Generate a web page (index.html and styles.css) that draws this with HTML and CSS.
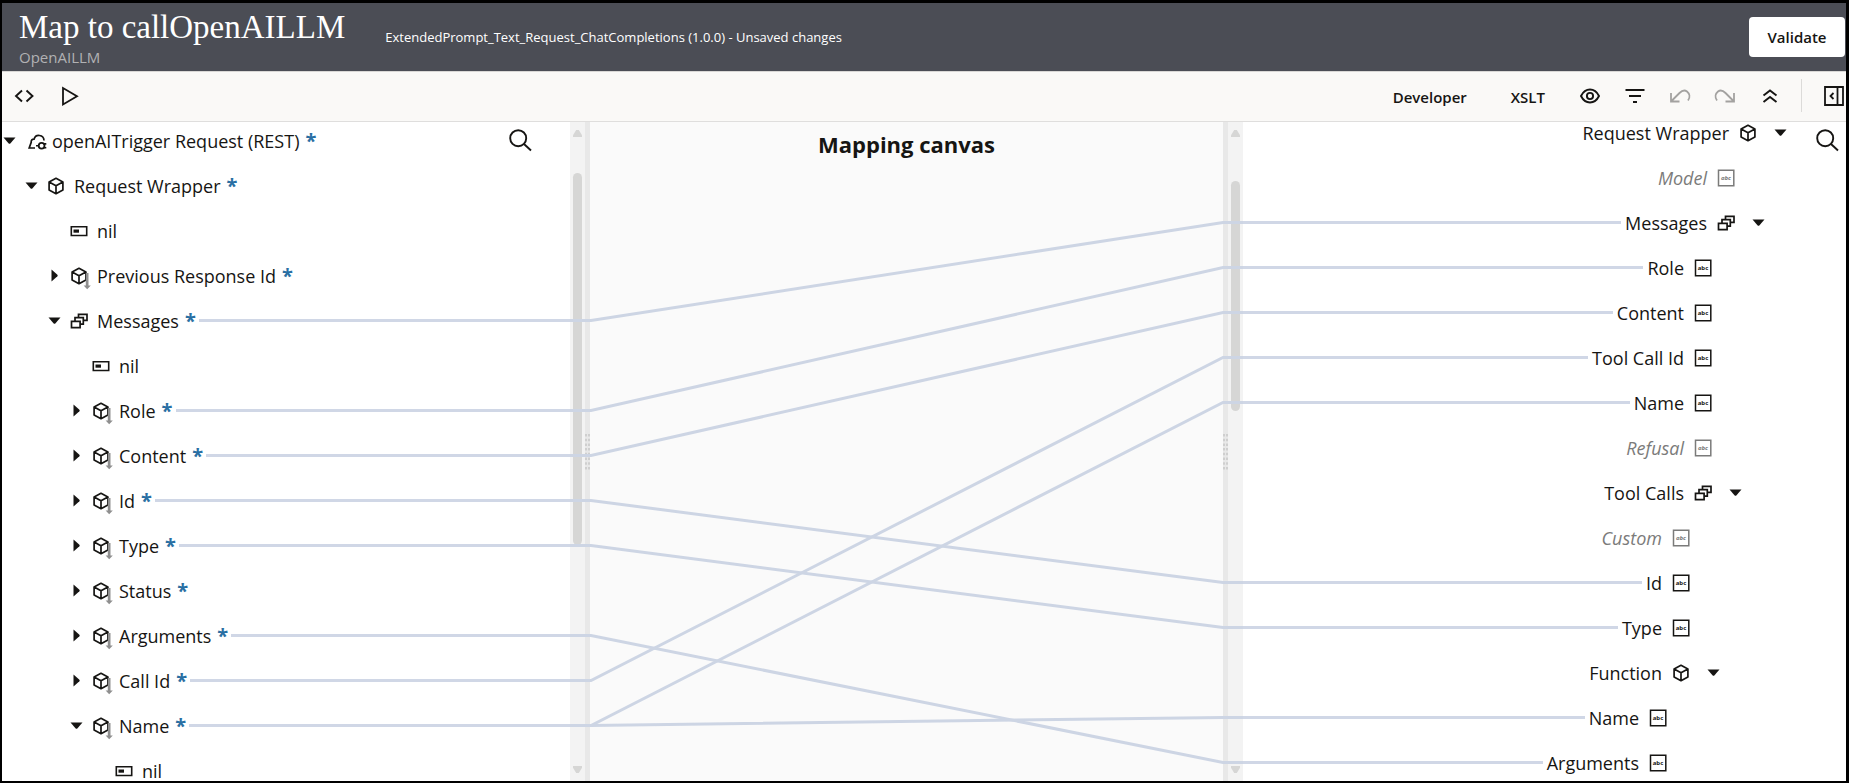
FILE: index.html
```html
<!DOCTYPE html>
<html lang="en">
<head>
<meta charset="utf-8">
<title>Map to callOpenAILLM</title>
<link rel="stylesheet" href="styles.css">
</head>
<body>
<svg class="defs" aria-hidden="true">
  <symbol id="cube" viewBox="0 0 20 20"><path d="M10 2.300 16.900 6v8L10 17.700 3.100 14V6zM3.100 6 10 9.800 16.900 6M10 9.800v7.900" fill="none" stroke="currentColor" stroke-width="1.700" stroke-linejoin="round"/></symbol>
  <symbol id="cube-down" viewBox="0 0 20 20"><path d="M10 2.300 16.900 6v8L10 17.700 3.100 14V6zM3.100 6 10 9.800 16.900 6M10 9.800v7.900" fill="none" stroke="currentColor" stroke-width="1.700" stroke-linejoin="round"/><path d="M16.800 7h2.700v12.500h2.300l-3.600 3.800-3.600-3.800h2.200z" fill="#8f8f8f"/></symbol>
  <symbol id="stack" viewBox="0 0 20 20"><path d="M2.500 10.300h8.600v6.400H2.500zM6 9.800V6.700h8.300v6.500H11.600M9.500 6.200V3.300h8.500v6h-3.200" fill="none" stroke="currentColor" stroke-width="1.700"/></symbol>
  <symbol id="attr" viewBox="0 0 20 20"><path d="M2.300 5.800h15.400v8.700H2.300z" fill="none" stroke="currentColor" stroke-width="1.600"/><path d="M4.500 8.500h5.500v3.200H4.500z" fill="currentColor"/></symbol>
  <symbol id="abc" viewBox="0 0 20 20"><path d="M2.500 2.300h15.300v15.400H2.500z" fill="none" stroke="currentColor" stroke-width="1.500"/><text x="10" y="12.300" text-anchor="middle" font-size="6" font-weight="700" fill="currentColor">abc</text></symbol>
  <symbol id="cloud" viewBox="0 0 20 20"><path d="M11 17H5.200l2-5.600c-.3-2 1-3.500 2.900-3.300C10.800 5.600 13 4.200 15.500 4.500c2.700.3 4.400 2.300 4.500 5" fill="none" stroke="currentColor" stroke-width="1.700"/><circle cx="17.600" cy="14.800" r="2.900" fill="none" stroke="currentColor" stroke-width="1.800"/><path d="M12 14.800h2.700M19.500 12.900h2.800M19.500 16.800h2.800" stroke="currentColor" stroke-width="1.600"/></symbol>
  <symbol id="down" viewBox="0 0 15 15"><path d="M1.500 4.500h12L8.300 10.400q-.8.700-1.600 0z" fill="currentColor"/></symbol>
  <symbol id="right" viewBox="0 0 15 15"><path d="M4.500 1.500v12L10.400 8.300q.7-.8 0-1.600z" fill="currentColor"/></symbol>
  <symbol id="search" viewBox="0 0 24 24"><circle cx="10.200" cy="10.200" r="8" fill="none" stroke="currentColor" stroke-width="1.900"/><path d="m16 16 7 6.500" stroke="currentColor" stroke-width="1.900"/></symbol>
  <symbol id="grip" viewBox="0 0 5 36"><path d="M1 0v36M4 0v36" stroke="#cfcfcf" stroke-width="2" stroke-dasharray="2.500 2.200"/></symbol>
</svg>

<div class="frame">
  <header class="header">
    <div class="names">
      <h1 class="title">Map to callOpenAILLM</h1>
      <p class="subtitle">OpenAILLM</p>
    </div>
    <p class="status">ExtendedPrompt_Text_Request_ChatCompletions (1.0.0) - Unsaved changes</p>
    <button class="validate" type="button">Validate</button>
  </header>

  <div class="toolbar">
    <div class="tools">
      <button class="tool" type="button" aria-label="Code"><svg viewBox="0 0 24 24"><path d="M10 6.500 4 12l6 5.500M14.500 6.500l6 5.500-6 5.500" fill="none" stroke="currentColor" stroke-width="1.900"/></svg></button>
      <button class="tool" type="button" aria-label="Test"><svg viewBox="0 0 24 24"><path d="M5 4v16.500L19 12.200z" fill="none" stroke="currentColor" stroke-width="1.800"/></svg></button>
    </div>
    <div class="tools tools-end">
      <button class="text-tool" type="button">Developer</button>
      <button class="text-tool" type="button">XSLT</button>
      <button class="tool" type="button" aria-label="View"><svg viewBox="0 0 24 24"><path d="M3 12c2-4 5-6.500 9-6.500S19 8 21 12c-2 4-5 6.500-9 6.500S5 16 3 12z" fill="none" stroke="currentColor" stroke-width="1.900"/><circle cx="12" cy="12" r="3.100" fill="none" stroke="currentColor" stroke-width="1.900"/></svg></button>
      <button class="tool" type="button" aria-label="Filter"><svg viewBox="0 0 24 24"><path d="M2.500 6h19M6 12h12M10 18h4" stroke="currentColor" stroke-width="1.900"/></svg></button>
      <button class="tool" type="button" aria-label="Undo" disabled><svg viewBox="0 0 24 24"><path d="M3 9v8.500h8.500M3.500 17 11.500 9c2-2 5-3.500 7.500-1.500s3.500 5.500 1 9" fill="none" stroke="currentColor" stroke-width="1.800"/></svg></button>
      <button class="tool" type="button" aria-label="Redo" disabled><svg viewBox="0 0 24 24"><path d="M21 9v8.500h-8.500M20.500 17 12.500 9c-2-2-5-3.500-7.500-1.500s-3.500 5.500-1 9" fill="none" stroke="currentColor" stroke-width="1.800"/></svg></button>
      <button class="tool" type="button" aria-label="Collapse all"><svg viewBox="0 0 24 24"><path d="m5.500 11.500 6.500-5 6.500 5M5.500 18l6.500-5 6.500 5" fill="none" stroke="currentColor" stroke-width="1.900"/></svg></button>
      <span class="divider"></span>
      <button class="tool panel-toggle" type="button" aria-label="Open panel"><svg viewBox="0 0 24 24"><path d="M3 3h18v18H3zM15.500 3v18M11.500 9l-3 3 3 3" fill="none" stroke="currentColor" stroke-width="1.800"/></svg></button>
    </div>
  </div>

  <main class="mapper">
    <section class="pane source" aria-label="Source">
      <button class="search" type="button" aria-label="Search source"><svg><use href="#search"/></svg></button>
      <ul class="tree">
        <li class="row l0"><button class="caret" aria-label="Collapse"><svg><use href="#down"/></svg></button><svg class="icon"><use href="#cloud"/></svg><span>openAITrigger Request (REST)</span><b class="req">*</b></li>
        <li class="row l1"><button class="caret" aria-label="Collapse"><svg><use href="#down"/></svg></button><svg class="icon"><use href="#cube"/></svg><span>Request Wrapper</span><b class="req">*</b></li>
        <li class="row l2"><i class="caret"></i><svg class="icon"><use href="#attr"/></svg><span>nil</span></li>
        <li class="row l2"><button class="caret" aria-label="Expand"><svg><use href="#right"/></svg></button><svg class="icon"><use href="#cube-down"/></svg><span>Previous Response Id</span><b class="req">*</b></li>
        <li class="row l2"><button class="caret" aria-label="Collapse"><svg><use href="#down"/></svg></button><svg class="icon"><use href="#stack"/></svg><span>Messages</span><b class="req">*</b><i class="wire"></i></li>
        <li class="row l3"><i class="caret"></i><svg class="icon"><use href="#attr"/></svg><span>nil</span></li>
        <li class="row l3"><button class="caret" aria-label="Expand"><svg><use href="#right"/></svg></button><svg class="icon"><use href="#cube-down"/></svg><span>Role</span><b class="req">*</b><i class="wire"></i></li>
        <li class="row l3"><button class="caret" aria-label="Expand"><svg><use href="#right"/></svg></button><svg class="icon"><use href="#cube-down"/></svg><span>Content</span><b class="req">*</b><i class="wire"></i></li>
        <li class="row l3"><button class="caret" aria-label="Expand"><svg><use href="#right"/></svg></button><svg class="icon"><use href="#cube-down"/></svg><span>Id</span><b class="req">*</b><i class="wire"></i></li>
        <li class="row l3"><button class="caret" aria-label="Expand"><svg><use href="#right"/></svg></button><svg class="icon"><use href="#cube-down"/></svg><span>Type</span><b class="req">*</b><i class="wire"></i></li>
        <li class="row l3"><button class="caret" aria-label="Expand"><svg><use href="#right"/></svg></button><svg class="icon"><use href="#cube-down"/></svg><span>Status</span><b class="req">*</b></li>
        <li class="row l3"><button class="caret" aria-label="Expand"><svg><use href="#right"/></svg></button><svg class="icon"><use href="#cube-down"/></svg><span>Arguments</span><b class="req">*</b><i class="wire"></i></li>
        <li class="row l3"><button class="caret" aria-label="Expand"><svg><use href="#right"/></svg></button><svg class="icon"><use href="#cube-down"/></svg><span>Call Id</span><b class="req">*</b><i class="wire"></i></li>
        <li class="row l3"><button class="caret" aria-label="Collapse"><svg><use href="#down"/></svg></button><svg class="icon"><use href="#cube-down"/></svg><span>Name</span><b class="req">*</b><i class="wire"></i></li>
        <li class="row l4"><i class="caret"></i><svg class="icon"><use href="#attr"/></svg><span>nil</span></li>
      </ul>
    </section>

    <section class="center" aria-label="Mapping canvas">
      <div class="scrollbar"><i class="arrow up"></i><div class="track"><i class="thumb thumb-source"></i></div><i class="arrow dn"></i></div>
      <div class="splitter"><svg><use href="#grip"/></svg></div>
      <div class="canvas"><h2 class="canvas-title">Mapping canvas</h2></div>
      <div class="splitter"><svg><use href="#grip"/></svg></div>
      <div class="scrollbar"><i class="arrow up"></i><div class="track"><i class="thumb thumb-target"></i></div><i class="arrow dn"></i></div>
      <svg class="links" viewBox="0 0 673 659" preserveAspectRatio="none" aria-hidden="true">
        <path d="M0 198.500H21L653 100.500H673"/>
        <path d="M0 288.500H21L653 145.500H673"/>
        <path d="M0 333.500H21L653 190.500H673"/>
        <path d="M0 378.500H21L653 460.500H673"/>
        <path d="M0 423.500H21L653 505.500H673"/>
        <path d="M0 513.500H21L653 640.500H673"/>
        <path d="M0 558.500H21L653 235.500H673"/>
        <path d="M0 603.500H21L653 280.500H673"/>
        <path d="M21 603.500 653 595.500H673"/>
      </svg>
    </section>

    <section class="pane target" aria-label="Target">
      <button class="search" type="button" aria-label="Search target"><svg><use href="#search"/></svg></button>
      <ul class="tree">
        <li class="row l1"><span>Request Wrapper</span><svg class="icon"><use href="#cube"/></svg><button class="caret" aria-label="Collapse"><svg><use href="#down"/></svg></button></li>
        <li class="row l2 unset"><span>Model</span><svg class="icon"><use href="#abc"/></svg><i class="caret"></i></li>
        <li class="row l2"><i class="wire"></i><span>Messages</span><svg class="icon"><use href="#stack"/></svg><button class="caret" aria-label="Collapse"><svg><use href="#down"/></svg></button></li>
        <li class="row l3"><i class="wire"></i><span>Role</span><svg class="icon"><use href="#abc"/></svg><i class="caret"></i></li>
        <li class="row l3"><i class="wire"></i><span>Content</span><svg class="icon"><use href="#abc"/></svg><i class="caret"></i></li>
        <li class="row l3"><i class="wire"></i><span>Tool Call Id</span><svg class="icon"><use href="#abc"/></svg><i class="caret"></i></li>
        <li class="row l3"><i class="wire"></i><span>Name</span><svg class="icon"><use href="#abc"/></svg><i class="caret"></i></li>
        <li class="row l3 unset"><span>Refusal</span><svg class="icon"><use href="#abc"/></svg><i class="caret"></i></li>
        <li class="row l3"><span>Tool Calls</span><svg class="icon"><use href="#stack"/></svg><button class="caret" aria-label="Collapse"><svg><use href="#down"/></svg></button></li>
        <li class="row l4 unset"><span>Custom</span><svg class="icon"><use href="#abc"/></svg><i class="caret"></i></li>
        <li class="row l4"><i class="wire"></i><span>Id</span><svg class="icon"><use href="#abc"/></svg><i class="caret"></i></li>
        <li class="row l4"><i class="wire"></i><span>Type</span><svg class="icon"><use href="#abc"/></svg><i class="caret"></i></li>
        <li class="row l4"><span>Function</span><svg class="icon"><use href="#cube"/></svg><button class="caret" aria-label="Collapse"><svg><use href="#down"/></svg></button></li>
        <li class="row l5"><i class="wire"></i><span>Name</span><svg class="icon"><use href="#abc"/></svg><i class="caret"></i></li>
        <li class="row l5"><i class="wire"></i><span>Arguments</span><svg class="icon"><use href="#abc"/></svg><i class="caret"></i></li>
      </ul>
    </section>
  </main>
</div>
</body>
</html>
```

FILE: styles.css
```css
* { box-sizing: border-box; }
body {
  margin: 0;
  color: #161513;
  background: #fff;
  font-family: "Open Sans", "Noto Sans", sans-serif;
}
button {
  padding: 0;
  border: 0;
  background: none;
  color: inherit;
  font-family: inherit;
}
h1, h2, p, ul { margin: 0; padding: 0; }
svg { display: block; overflow: visible; }
symbol { overflow: visible; }
.defs { position: absolute; width: 0; height: 0; }

.frame {
  display: flex;
  flex-direction: column;
  height: 100vh;
  margin-right: 3px;
  border: 2px solid #000;
  border-top-width: 3px;
  border-right-width: 3px;
}

/* Header */
.header {
  display: flex;
  align-items: center;
  height: 68px;
  padding-left: 17px;
  background: #4b4d55;
  color: #fff;
}
.title {
  padding-top: 3px;
  font: 400 33px/36px "Liberation Serif", serif;
}
.subtitle {
  color: #b1b1b3;
  font-size: 15px;
  line-height: 24px;
}
.status {
  flex: 1;
  margin-left: 40px;
  font-size: 13px;
  line-height: 20px;
}
.validate {
  width: 96px;
  height: 40px;
  margin-right: 1px;
  border-radius: 4px;
  background: #fff;
  color: #161513;
  font-size: 15px;
  font-weight: 600;
}

/* Toolbar */
.toolbar {
  display: flex;
  justify-content: space-between;
  height: 51px;
  border-top: 1px solid #d9d8d6;
  border-bottom: 1px solid #dfdedd;
  background: #faf9f7;
}
.tools { display: flex; align-items: center; gap: 22px; padding: 0 0 2px 10px; }
.tools-end { gap: 21px; }
.tool { width: 24px; height: 24px; }
.tool:disabled { color: #a3a2a0; }
.tool svg { width: 24px; height: 24px; }
.text-tool {
  margin-right: 12px;
  padding-top: 3px;
  font-size: 15px;
  font-weight: 600;
}
.text-tool + .text-tool { margin-left: 11px; }
.divider { width: 1px; height: 33px; margin-left: -2px; background: #dcdbd9; }
.panel-toggle { margin-left: -1px; }

/* Mapper */
.mapper { display: flex; flex: 1; min-height: 0; overflow: hidden; }
.pane { position: relative; overflow: hidden; }
.source { flex: 568 1 0; }
.target { flex: 603 1 0; }
.center { position: relative; display: flex; flex: 673 1 0; }
.search { position: absolute; z-index: 1; top: 6px; width: 24px; height: 24px; }
.search svg { width: 24px; height: 24px; }
.source .search { right: 38px; }
.target .search { right: 7px; }

.tree { list-style: none; }
.source .tree { margin-top: -4px; }
.target .tree { margin-top: -12px; }
.row {
  display: flex;
  align-items: center;
  height: 45px;
  font-size: 18px;
  line-height: 24px;
  white-space: nowrap;
}
.caret { flex: none; width: 15px; height: 15px; }
.caret svg { width: 15px; height: 15px; }
.icon { flex: none; width: 20px; height: 20px; }
.wire { flex: 1; height: 3px; background: #d0d7e6; }
.req { margin-left: 6px; color: #2a6fa3; font-size: 20px; }
.unset { color: #7b7b7a; font-style: italic; }

.source .icon { margin: 0 8px 0 7px; }
.source .wire { margin-left: 3px; }
.source .l1 { padding-left: 22px; }
.source .l2 { padding-left: 45px; }
.source .l3 { padding-left: 67px; }
.source .l4 { padding-left: 90px; }

.target .row { justify-content: flex-end; }
.target .icon { margin: 0 15px 0 9px; }
.target .wire { margin-right: 4px; }
.target .l1 { padding-right: 58px; }
.target .l2 { padding-right: 80px; }
.target .l3 { padding-right: 103px; }
.target .l4 { padding-right: 125px; }
.target .l5 { padding-right: 148px; }

.scrollbar {
  display: flex;
  flex-direction: column;
  align-items: center;
  width: 15px;
  padding: 8px 0;
  background: #f3f3f3;
}
.track { display: flex; flex: 1; flex-direction: column; width: 9px; }
.thumb { border-radius: 5px; background: #d6d6d5; }
.thumb-source { height: 372px; margin-top: 36px; }
.thumb-target { height: 230px; margin-top: 44px; }
.arrow { width: 9px; height: 7px; background: #d6d6d5; }
.up { clip-path: polygon(35% 0, 65% 0, 100% 75%, 100% 100%, 0 100%, 0 75%); }
.dn { clip-path: polygon(35% 100%, 65% 100%, 100% 25%, 100% 0, 0 0, 0 25%); }
.splitter { display: flex; align-items: center; width: 5px; background: #e8e8e8; }
.splitter svg { width: 5px; height: 36px; }
.canvas { flex: 1; background: #fafafa; text-align: center; }
.canvas-title { padding-top: 6px; font-size: 22px; line-height: 32px; }
.links {
  position: absolute;
  top: 0;
  left: 0;
  width: 100%;
  height: 659px;
  fill: none;
  stroke: #cdd5e4;
  stroke-width: 3;
}
```
